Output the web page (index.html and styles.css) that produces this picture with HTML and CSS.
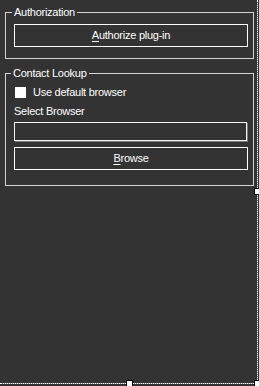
FILE: index.html
```html
<!DOCTYPE html>
<html>
<head>
<meta charset="utf-8">
<link rel="stylesheet" href="styles.css">
</head>
<body>
<div class="canvas">
  <div class="group g1">
    <div class="title">Authorization</div>
    <div class="btn"><span class="u">A</span>uthorize plug-in</div>
  </div>
  <div class="group g2">
    <div class="title">Contact Lookup</div>
    <div class="check"><span class="box"></span><span>Use default browser</span></div>
    <div class="label">Select Browser</div>
    <div class="textbox"></div>
    <div class="btn"><span class="u">B</span>rowse</div>
  </div>
  <span class="handle h-right"></span>
  <span class="handle h-bottom"></span>
  <span class="handle h-corner"></span>
</div>
</body>
</html>
```
FILE: styles.css
```css
html, body {
  margin: 0;
  background: #333333;
}
body {
  width: 259px;
  height: 386px;
  overflow: hidden;
  font-family: "Liberation Sans", Arial, sans-serif;
  font-size: 11px;
  letter-spacing: -0.25px;
  color: #ffffff;
}
.canvas {
  position: relative;
  display: flow-root;
  box-sizing: border-box;
  width: 258px;
  height: 384px;
  padding: 12px 0 0 5px;
  border-right: 1px dotted #ffffff;
  border-bottom: 1px dotted #ffffff;
  background: linear-gradient(#333333, #333333) padding-box, #7a7a7a;
}
.group {
  box-sizing: border-box;
  width: 249px;
  border: 1px solid #d4d4d4;
  padding: 0 5px 0 8px;
}
.g1 {
  padding-bottom: 11px;
}
.g2 {
  margin-top: 14px;
  padding-bottom: 15px;
}
.title {
  margin-top: -7px;
  line-height: 13px;
  width: fit-content;
  padding: 0 2px;
  background: #333333;
}
.g1 .title { margin-left: -2px; }
.g2 .title { margin-left: -3px; }
.btn {
  box-sizing: border-box;
  width: 234px;
  height: 23px;
  margin-top: 5px;
  border: 1px solid #ffffff;
  display: flex;
  align-items: center;
  justify-content: center;
  line-height: 13px;
}
.g2 .btn { margin-top: 6px; }
.u {
  text-decoration: underline;
  text-underline-offset: 2px;
}
.check {
  display: flex;
  align-items: center;
  height: 13px;
  margin-top: 6px;
  line-height: 13px;
}
.box {
  width: 11px;
  height: 11px;
  background: #ffffff;
  margin-left: 1px;
  margin-right: 7px;
  flex: none;
}
.label {
  margin-top: 6px;
  line-height: 13px;
}
.textbox {
  box-sizing: border-box;
  width: 233px;
  height: 19px;
  margin-top: 4px;
  border: 1px solid #f4f4f4;
  box-shadow: 1px 1px 0 #7a7a7a;
}
.handle {
  position: absolute;
  width: 5px;
  height: 5px;
  background: #ffffff;
  border: 1px solid #000000;
}
.h-right { left: 254px; top: 188px; }
.h-bottom { left: 126px; top: 380px; }
.h-corner { left: 254px; top: 380px; }
```
